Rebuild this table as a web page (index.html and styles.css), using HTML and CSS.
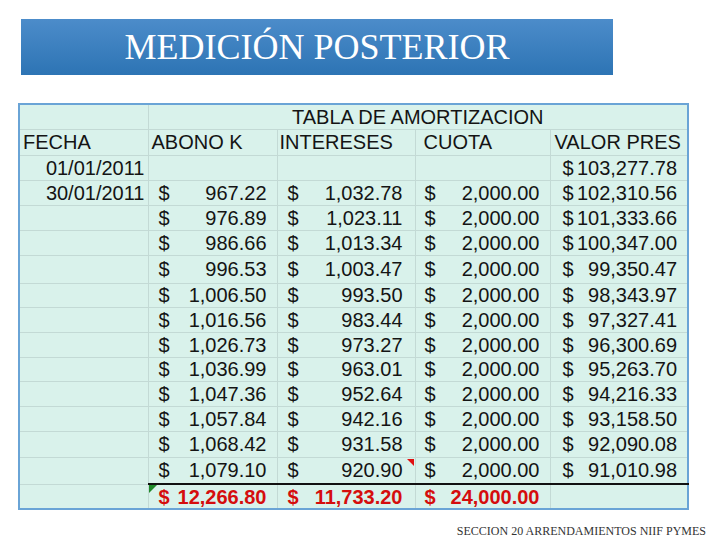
FILE: index.html
```html
<!DOCTYPE html>
<html lang="es">
<head>
<meta charset="utf-8">
<title>Medición posterior</title>
<link rel="stylesheet" href="styles.css">
</head>
<body>
<div class="slide">
  <header class="title"><h1>MEDICIÓN POSTERIOR</h1></header>
  <table class="amort">
    <colgroup><col class="c1"><col class="c2"><col class="c3"><col class="c4"><col class="c5"></colgroup>
    <tr><td></td><td colspan="4" class="caption">TABLA DE AMORTIZACION</td></tr>
    <tr class="h26"><td class="hd">FECHA</td><td class="hd abono">ABONO K</td><td class="hd int">INTERESES</td><td class="hd cuota">CUOTA</td><td class="hd">VALOR PRES</td></tr>
    <tr><td class="date">01/01/2011</td><td></td><td></td><td></td><td class="m"><span class="cur">$</span>103,277.78</td></tr>
    <tr><td class="date">30/01/2011</td><td class="m"><span class="cur">$</span>967.22</td><td class="m"><span class="cur">$</span>1,032.78</td><td class="m"><span class="cur">$</span>2,000.00</td><td class="m"><span class="cur">$</span>102,310.56</td></tr>
    <tr><td></td><td class="m"><span class="cur">$</span>976.89</td><td class="m"><span class="cur">$</span>1,023.11</td><td class="m"><span class="cur">$</span>2,000.00</td><td class="m"><span class="cur">$</span>101,333.66</td></tr>
    <tr><td></td><td class="m"><span class="cur">$</span>986.66</td><td class="m"><span class="cur">$</span>1,013.34</td><td class="m"><span class="cur">$</span>2,000.00</td><td class="m"><span class="cur">$</span>100,347.00</td></tr>
    <tr class="h28"><td></td><td class="m"><span class="cur">$</span>996.53</td><td class="m"><span class="cur">$</span>1,003.47</td><td class="m"><span class="cur">$</span>2,000.00</td><td class="m"><span class="cur">$</span>99,350.47</td></tr>
    <tr class="h24"><td></td><td class="m"><span class="cur">$</span>1,006.50</td><td class="m"><span class="cur">$</span>993.50</td><td class="m"><span class="cur">$</span>2,000.00</td><td class="m"><span class="cur">$</span>98,343.97</td></tr>
    <tr><td></td><td class="m"><span class="cur">$</span>1,016.56</td><td class="m"><span class="cur">$</span>983.44</td><td class="m"><span class="cur">$</span>2,000.00</td><td class="m"><span class="cur">$</span>97,327.41</td></tr>
    <tr><td></td><td class="m"><span class="cur">$</span>1,026.73</td><td class="m"><span class="cur">$</span>973.27</td><td class="m"><span class="cur">$</span>2,000.00</td><td class="m"><span class="cur">$</span>96,300.69</td></tr>
    <tr class="h24"><td></td><td class="m"><span class="cur">$</span>1,036.99</td><td class="m"><span class="cur">$</span>963.01</td><td class="m"><span class="cur">$</span>2,000.00</td><td class="m"><span class="cur">$</span>95,263.70</td></tr>
    <tr><td></td><td class="m"><span class="cur">$</span>1,047.36</td><td class="m"><span class="cur">$</span>952.64</td><td class="m"><span class="cur">$</span>2,000.00</td><td class="m"><span class="cur">$</span>94,216.33</td></tr>
    <tr><td></td><td class="m"><span class="cur">$</span>1,057.84</td><td class="m"><span class="cur">$</span>942.16</td><td class="m"><span class="cur">$</span>2,000.00</td><td class="m"><span class="cur">$</span>93,158.50</td></tr>
    <tr class="h26"><td></td><td class="m"><span class="cur">$</span>1,068.42</td><td class="m"><span class="cur">$</span>931.58</td><td class="m"><span class="cur">$</span>2,000.00</td><td class="m"><span class="cur">$</span>92,090.08</td></tr>
    <tr class="h27"><td></td><td class="m"><span class="cur">$</span>1,079.10</td><td class="m note-red"><span class="cur">$</span>920.90</td><td class="m"><span class="cur">$</span>2,000.00</td><td class="m"><span class="cur">$</span>91,010.98</td></tr>
    <tr class="total"><td class="plain"></td><td class="m note-green"><span class="cur">$</span>12,266.80</td><td class="m"><span class="cur">$</span>11,733.20</td><td class="m"><span class="cur">$</span>24,000.00</td><td></td></tr>
  </table>
  <footer class="foot">SECCION 20 ARRENDAMIENTOS NIIF PYMES</footer>
</div>
</body>
</html>
```
FILE: styles.css
```css
* { box-sizing: border-box; }
body {
  margin: 0;
  background: #ffffff;
  font-family: "Liberation Sans", Arial, sans-serif;
}
.slide {
  width: 720px;
  height: 540px;
  display: flex;
  flex-direction: column;
}
.title {
  margin: 19px 0 0 21px;
  width: 592px;
  height: 56px;
  background: linear-gradient(#4c8cca, #2d74b4);
}
.title h1 {
  margin: 0;
  font: 400 36px/56px "Liberation Serif", "Times New Roman", serif;
  color: #ffffff;
  text-align: center;
}
.amort {
  margin: 28px 0 0 18px;
  width: 669px;
  border-collapse: collapse;
  table-layout: fixed;
  background: #d9f2eb;
  border: 2px solid #6aa4d6;
  font-size: 20px;
  color: #141414;
}
col.c1 { width: 129px; }
col.c2 { width: 129px; }
col.c3 { width: 138px; }
col.c4 { width: 135px; }
col.c5 { width: 138px; }
.amort td {
  border: 1px solid #c3dad5;
  height: 25px;
  padding: 0;
  white-space: nowrap;
  line-height: 22px;
  position: relative;
}
.amort tr.h24 td { height: 24px; }
.amort tr.h26 td { height: 26px; }
.amort tr.h27 td { height: 27px; }
.amort tr.h28 td { height: 28px; }
.amort td.caption { text-align: center; }
.amort td.hd { padding-left: 4px; }
.amort td.hd:first-child { padding-left: 3px; }
.amort td.hd.abono { padding-left: 3px; }
.amort td.hd.int { padding-left: 2px; }
.amort td.hd.cuota { padding-left: 8px; }
.amort td.date { text-align: right; padding-right: 3px; }
.amort td.m { text-align: right; }
.amort td.m:nth-child(2) { padding: 0 10px 0 10px; }
.amort td.m:nth-child(3) { padding: 0 12px 0 10px; }
.amort td.m:nth-child(4) { padding: 0 10px 0 9px; }
.amort td.m:nth-child(5) { padding: 0 10px 0 12px; }
.cur { float: left; }
.amort tr.total td {
  color: #d50d0d;
  font-weight: 700;
}
.amort tr.total td:not(.plain) { border-top: 2px solid #111111; }
.amort td.note-red::after {
  content: "";
  position: absolute;
  top: 1px;
  right: 1px;
  border-top: 7px solid #e01010;
  border-left: 7px solid transparent;
}
.amort td.note-green::before {
  content: "";
  position: absolute;
  top: 0;
  left: 0;
  border-top: 8px solid #1f8a2a;
  border-right: 8px solid transparent;
}
.foot {
  align-self: flex-end;
  margin: 14px 14px 0 0;
  font: 12px/14px "Liberation Serif", "Times New Roman", serif;
  color: #333333;
}
```
